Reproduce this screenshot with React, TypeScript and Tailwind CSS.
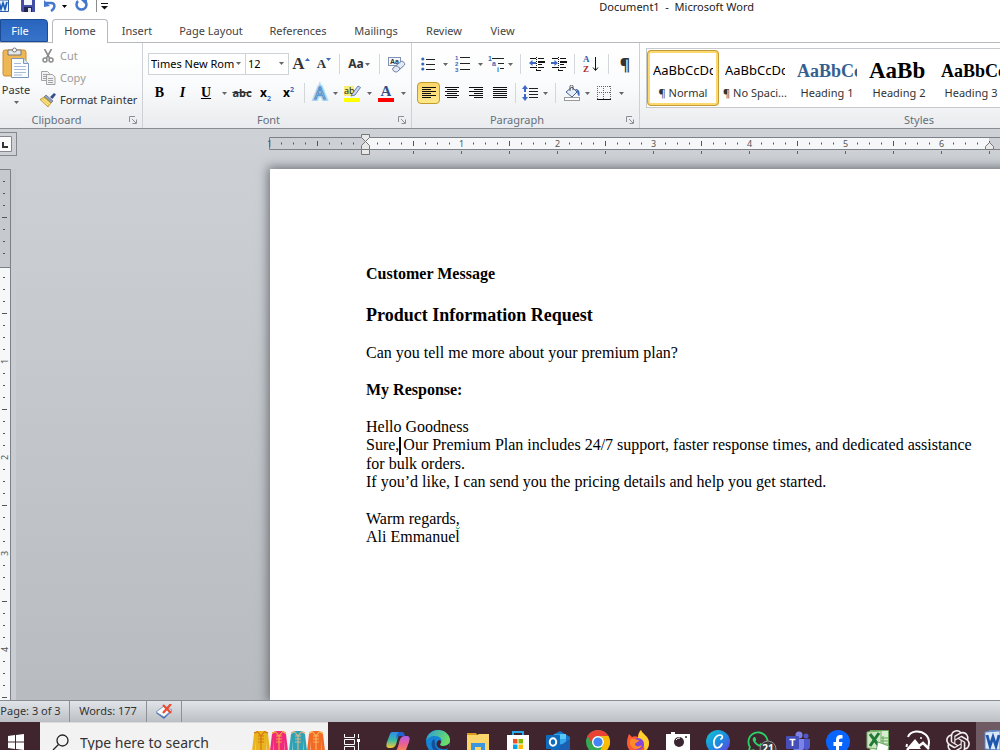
import type { ReactNode } from 'react';
import { FaWhatsapp } from 'react-icons/fa';
import { SiOpenai } from 'react-icons/si';
import { clsx } from 'clsx';

interface BtnProps {
  label: string;
  className?: string;
  active?: boolean;
  children: ReactNode;
}

const Btn = ({ label, className, active, children }: BtnProps) => (
  <button
    type="button"
    aria-label={label}
    className={clsx(
      'flex h-[22px] shrink-0 items-center justify-center rounded-sm border',
      active
        ? 'border-[#c29b29] bg-gradient-to-b from-[#fbd66b] to-[#ffe88a]'
        : 'border-transparent hover:bg-[#fdeeb3]',
      className,
    )}
  >
    {children}
  </button>
);

const Arrow = ({ className }: { className?: string }) => (
  <svg width="5" height="3" viewBox="0 0 5 3" className={clsx('shrink-0', className ?? 'text-[#666]')}>
    <path d="M0 0h5L2.5 3z" fill="currentColor" />
  </svg>
);

const DropArrow = ({ label, className }: { label: string; className?: string }) => (
  <Btn label={label} className={className ?? 'w-3'}>
    <Arrow />
  </Btn>
);

const Sep = ({ className }: { className?: string }) => (
  <div className={clsx('flex shrink-0 justify-center', className ?? 'w-2')}>
    <div className="h-5 w-px bg-[#d3d6da]" />
  </div>
);

interface GroupProps {
  title: string;
  className: string;
  launcher?: boolean;
  children: ReactNode;
}

const Group = ({ title, className, launcher, children }: GroupProps) => (
  <section aria-label={title} className={clsx('flex shrink-0 flex-col border-r border-[#cdd0d4]', className)}>
    <div className="min-h-0 flex-1">{children}</div>
    <div className="flex h-4 shrink-0 items-center pr-[5px] text-[#66707c]">
      <span className="flex-1 pr-1 text-center">{title}</span>
      {launcher && (
        <button type="button" aria-label={`${title} settings`}>
          <svg width="8" height="8" viewBox="0 0 8 8" fill="none" stroke="#8a8f96">
            <path d="M.5 6V.5H6M3 3l4 4M7.5 3.5v4h-4" />
          </svg>
        </button>
      )}
    </div>
  </section>
);

/* Paragraph icons */

const Lines = ({ rows }: { rows: [number, number][] }) => (
  <svg width="14" height="12" viewBox="0 0 14 12" shapeRendering="crispEdges">
    {rows.map(([x, w], i) => (
      <rect key={i} x={x} y={i * 2} width={w} height="1" fill="#111" />
    ))}
  </svg>
);

const alignments: { label: string; active?: boolean; className: string; rows: [number, number][] }[] = [
  { label: 'Align left', active: true, className: 'w-[23px]', rows: [[0, 14], [0, 9], [0, 14], [0, 9], [0, 14], [0, 9]] },
  { label: 'Center', className: 'w-6', rows: [[0, 14], [2, 10], [0, 14], [2, 10], [0, 14], [2, 10]] },
  { label: 'Align right', className: 'w-6', rows: [[0, 14], [5, 9], [0, 14], [5, 9], [0, 14], [5, 9]] },
  { label: 'Justify', className: 'w-[23px]', rows: [[0, 14], [0, 14], [0, 14], [0, 14], [0, 14], [0, 14]] },
];

const BulletsIcon = () => (
  <svg width="14" height="14" viewBox="0 0 14 14">
    {[2, 7, 12].map((y) => (
      <g key={y}>
        <circle cx="1.8" cy={y} r="1.6" fill="#3a67b8" />
        <path d={`M5 ${y + 0.5}h9`} stroke="#222" />
      </g>
    ))}
  </svg>
);

const NumberingIcon = () => (
  <svg width="15" height="16" viewBox="0 0 15 16" fontFamily="Liberation Sans, sans-serif">
    {[2, 8, 14].map((y, i) => (
      <g key={y}>
        <text x="0" y={y + 2} fontSize="6" fontWeight="700" fill="#3a67b8">{i + 1}</text>
        <path d={`M5 ${y - 0.5}h10`} stroke="#222" />
      </g>
    ))}
  </svg>
);

const MultilevelIcon = () => (
  <svg width="17" height="16" viewBox="0 0 17 16" fontSize="7" fontWeight="700" fontFamily="Liberation Sans, sans-serif">
    <g fill="#3a67b8">
      <text x="0" y="5">1</text>
      <text x="4" y="10">a</text>
      <text x="9" y="16">i</text>
    </g>
    <path d="M4 2.5h12M10 7.5h6M12 12.5h4" stroke="#222" />
  </svg>
);

const IndentIcon = ({ out }: { out?: boolean }) => (
  <svg width="16" height="14" viewBox="0 0 16 14">
    <path d="M1 1.5h6M9 1.5h6M1 10.5h6M9 10.5h6M7 13.5h5M9 7.5h4" stroke="#111" />
    <path d="M9 4h7v2H9z" fill="#111" />
    <path d="M7.5 0v14" stroke="#111" strokeDasharray="1 1" />
    <path d={out ? 'M0 6l3.5-3v2H7v2H3.5v2z' : 'M7 6L3.5 3v2H0v2h3.5v2z'} fill="#3a67c8" />
  </svg>
);

const SortIcon = () => (
  <svg width="16" height="18" viewBox="0 0 16 18" fontSize="9" fontWeight="700" fontFamily="Liberation Serif, serif">
    <text x="0" y="7" fill="#2f5fb0">A</text>
    <text x="0" y="17" fill="#a32b2b">Z</text>
    <path d="M12.5 2v13M10 12.5l2.5 3 2.5-3" stroke="#111" fill="none" />
  </svg>
);

const SpacingIcon = () => (
  <svg width="16" height="16" viewBox="0 0 16 16">
    <path d="M3 0l3 4H4v3H2V4H0zM3 16l3-4H4V9H2v3H0z" fill="#3a67c8" />
    <path d="M7 3.5h9M7 6.5h9M7 9.5h9M7 12.5h9" stroke="#222" />
  </svg>
);

const BucketIcon = () => (
  <svg width="17" height="16" viewBox="0 0 17 16">
    <path d="M2 7l6-5 5 5-5 5z" fill="#e6eefa" stroke="#46638f" />
    <path d="M6 6V1.5a1.5 1.5 0 013 0V5" fill="none" stroke="#555" />
    <path d="M11 4c4 0 5 2 4.5 7-2 0-2-3-2.5-5z" fill="#3a67b8" />
    <rect x=".5" y="12.5" width="15" height="3" fill="#fff" stroke="#999" />
  </svg>
);

const BordersIcon = () => (
  <svg width="14" height="14" viewBox="0 0 14 14">
    <path d="M0 .5h14M0 6.5h14M.5 0v13M6.5 0v13M13.5 0v13" fill="none" stroke="#666" strokeDasharray="1 1" />
    <path d="M0 13.5h14" stroke="#111" />
  </svg>
);

/* Clipboard icons */

const PasteIcon = () => (
  <svg width="28" height="32" viewBox="0 0 28 32">
    <rect x="1" y="3" width="23" height="26" rx="2" fill="#eeb655" stroke="#c98f36" />
    <path d="M6 3h13v5H6z" fill="#e6e6e6" stroke="#777" />
    <circle cx="12.5" cy="3" r="2" fill="#fff" stroke="#777" />
    <path d="M9.5 11.5h12l5 5v14h-17z" fill="#fbfdff" stroke="#7b97bd" />
    <path d="M21.5 11.5v5h5" fill="#dce7f5" stroke="#7b97bd" />
    <path d="M12 16.5h7M12 19.5h12M12 22.5h12M12 25.5h12M12 28h8" stroke="#a9bcd6" />
  </svg>
);

const CutIcon = () => (
  <svg width="16" height="14" viewBox="0 0 16 14" fill="none" stroke="#8b8b8b">
    <path d="M4.5 0l5 9M11.5 0l-5 9" strokeWidth="1.6" />
    <circle cx="5" cy="11" r="2" strokeWidth="1.5" />
    <circle cx="11" cy="11" r="2" strokeWidth="1.5" />
  </svg>
);

const CopyIcon = () => (
  <svg width="16" height="14" viewBox="0 0 16 14" fill="#f2f2f2" stroke="#a3a3a3">
    <path d="M1.5.5h6l2 2v7h-8z" />
    <path d="M3 3.5h4M3 5.5h4M3 7.5h4" />
    <path d="M6.5 3.5h6l2.5 2.5v7.5H6.5z" />
    <path d="M8 7.5h5M8 9.5h5M8 11.5h5" />
  </svg>
);

const BrushIcon = () => (
  <svg width="16" height="14" viewBox="0 0 16 14">
    <path d="M10 4l4-4 2 1.5L12.5 6z" fill="#34508c" />
    <path d="M6 2l7 6-2 2-7-6z" fill="#8fa0bb" stroke="#4a5568" strokeWidth=".6" />
    <path d="M4 4l7 6-3 4L0 6.5z" fill="#f1cd53" stroke="#a07a1c" strokeWidth=".6" />
    <path d="M2 7l6 5M4 6l6 5" stroke="#fff2b5" strokeWidth=".8" />
  </svg>
);

/* Font icons */

const ClearIcon = () => (
  <svg width="18" height="17" viewBox="0 0 18 17">
    <rect x=".5" y="1.5" width="12" height="8" fill="#f4f7fb" stroke="#7f93b5" />
    <text x="2" y="8" fontSize="7" fontWeight="700" fontFamily="Liberation Sans, sans-serif" fill="#333">Aa</text>
    <path d="M5 12l8-6.5c1.5-1 4.5 1.5 3.5 3.5l-7 6.5c-2 1.5-6-1-4.5-3.5z" fill="#e3eaf6" stroke="#6278a3" />
    <path d="M8 10c2 0 3.5 1.5 4 3" fill="none" stroke="#6278a3" />
  </svg>
);

const HighlightIcon = () => (
  <svg width="17" height="17" viewBox="0 0 17 17">
    <rect x="0" y="1" width="10" height="10" fill="#f7ee78" />
    <text x="0" y="9" fontSize="9" fill="#222">ab</text>
    <path d="M8 9l6-8 2.5 1.5L11 10l-4 1z" fill="#c9d7ee" stroke="#4c6391" strokeWidth=".8" />
    <rect x="0" y="13" width="16" height="4" fill="#ffff00" />
  </svg>
);

const FontColorIcon = () => (
  <svg width="16" height="17" viewBox="0 0 16 17" className="overflow-visible">
    <text x="8" y="11" fontSize="15" fontWeight="700" textAnchor="middle" fontFamily="Liberation Serif, serif" fill="#304f88">A</text>
    <rect x="0" y="13" width="16" height="4" fill="#ff0000" />
  </svg>
);

const EffectsIcon = () => (
  <svg width="16" height="18" viewBox="0 0 16 18" className="shrink-0 overflow-visible">
    <text x="8" y="15" fontSize="17" textAnchor="middle" fill="#eef7ff" stroke="#a8d4f2" strokeWidth="4" paintOrder="stroke">A</text>
    <text x="8" y="15" fontSize="17" textAnchor="middle" fill="#f2f9ff" stroke="#4b8bc6" strokeWidth="1">A</text>
  </svg>
);

const styles = [
  { name: '¶ Normal', sample: 'AaBbCcDc', look: 'text-[13px] text-black', active: true },
  { name: '¶ No Spaci...', sample: 'AaBbCcDc', look: 'text-[13px] text-black' },
  { name: 'Heading 1', sample: 'AaBbCc', look: "font-['Liberation_Serif',serif] text-lg font-bold text-[#365f91]" },
  { name: 'Heading 2', sample: 'AaBb', look: "font-['Liberation_Serif',serif] text-[23px] font-bold text-black" },
  { name: 'Heading 3', sample: 'AaBbCc', look: "font-['Liberation_Serif',serif] text-lg font-bold text-black" },
];

const tabs = [
  { name: 'Insert', className: 'w-[58px]' },
  { name: 'Page Layout', className: 'w-[90px]' },
  { name: 'References', className: 'w-[84px]' },
  { name: 'Mailings', className: 'w-[72px]' },
  { name: 'Review', className: 'w-16' },
  { name: 'View', className: 'w-[53px]' },
];

const TitleBar = () => (
  <header className="flex h-[19px] shrink-0 items-start bg-white">
    <svg width="9" height="12" viewBox="0 0 9 12">
      <path d="M0 0h8.5v11.5H0" fill="#eaf2fc" stroke="#2c5ba3" />
      <path d="M-1 2l2 7 2-6 2 6 2-7" fill="none" stroke="#1f5fb8" strokeWidth="1.8" />
    </svg>
    <button type="button" aria-label="Save" className="ml-3">
      <svg width="14" height="12" viewBox="0 0 14 12">
        <path d="M0 0h14v12H1l-1-1z" fill="#4450a8" />
        <path d="M3 0h8v5H3z" fill="#f3f5fb" />
        <path d="M3 7h8v5H3z" fill="#20264f" />
        <path d="M7 8h3v4H7z" fill="#dde2f0" />
      </svg>
    </button>
    <button type="button" aria-label="Undo" className="ml-[9px]">
      <svg width="13" height="12" viewBox="0 0 13 12" fill="none" stroke="#4478cf" strokeWidth="2.5">
        <path d="M2 3h5c5 0 4 6 0 8" />
        <path d="M0 0v7l6-1z" fill="#4478cf" stroke="none" />
      </svg>
    </button>
    <button type="button" aria-label="Undo list" className="ml-[5px] flex h-2 items-end">
      <Arrow className="text-black" />
    </button>
    <button type="button" aria-label="Repeat" className="ml-2">
      <svg width="13" height="12" viewBox="0 0 13 12" fill="none" stroke="#4478cf" strokeWidth="2.5">
        <path d="M3 1a5 5 0 107 0" />
        <path d="M6 0h6v6z" fill="#4478cf" stroke="none" />
      </svg>
    </button>
    <div className="ml-2 h-3 w-px bg-[#8b8b8b]" />
    <button type="button" aria-label="Customize toolbar" className="ml-1">
      <svg width="7" height="10" viewBox="0 0 7 10">
        <path d="M0 3.5h7" stroke="#111" />
        <path d="M0 6h7L3.5 9.5z" fill="#111" />
      </svg>
    </button>
    <h1 className="mr-[246px] ml-auto text-[11px] leading-[14px] text-[#222]">Document1 &nbsp;-&nbsp; Microsoft Word</h1>
  </header>
);

const TabBar = () => (
  <nav className="flex h-6 shrink-0 items-end border-b border-[#b6babf] bg-white text-[#444]">
    <button type="button" className="h-[23px] w-12 rounded-tr border border-[#1c4b96] bg-gradient-to-b from-[#2a65bd] to-[#3673c9] pt-0.5 pr-2 text-white">
      File
    </button>
    <button type="button" className="-mb-px ml-1 h-6 w-14 rounded-t border border-b-0 border-[#b6babf] bg-white">
      Home
    </button>
    {tabs.map((tab) => (
      <button key={tab.name} type="button" className={clsx('h-[23px] pt-0.5 whitespace-nowrap', tab.className)}>
        {tab.name}
      </button>
    ))}
  </nav>
);

const selectClass = 'h-full w-full appearance-none bg-transparent pl-0.5 text-black outline-none';

const Ribbon = () => (
  <div className="flex h-[86px] shrink-0 overflow-hidden border-b border-[#8a8e94] bg-gradient-to-b from-white via-[#fafbfc] to-[#e9ebee] text-[#333]">
    <Group title="Clipboard" className="-ml-3 w-[155px]" launcher>
      <div className="flex pt-1 pl-3">
        <button type="button" className="flex w-8 shrink-0 flex-col items-center">
          <PasteIcon />
          <span className="mt-1 leading-[14px]">Paste</span>
          <Arrow className="mt-1 text-[#666]" />
        </button>
        <div className="ml-2 flex flex-col text-[#9b9b9b]">
          <button type="button" className="flex h-[22px] items-center gap-1 pb-1">
            <CutIcon />
            Cut
          </button>
          <button type="button" className="flex h-[22px] items-center gap-1 pb-1">
            <CopyIcon />
            Copy
          </button>
          <button type="button" className="flex h-[22px] items-center gap-1 pb-1 whitespace-nowrap text-[#333]">
            <BrushIcon />
            Format Painter
          </button>
        </div>
      </div>
    </Group>

    <Group title="Font" className="w-[269px]" launcher>
      <div className="flex flex-col gap-[7px] pt-[10px] pl-[5px]">
        <div className="flex h-[22px] items-center">
          <div className="relative h-[22px] w-[98px] border border-[#cfd2d6] bg-white">
            <select aria-label="Font name" className={selectClass}>
              <option>Times New Rom</option>
            </select>
            <Arrow className="pointer-events-none absolute top-2 right-1 text-[#666]" />
          </div>
          <div className="relative h-[22px] w-[43px] border border-l-0 border-[#cfd2d6] bg-white">
            <select aria-label="Font size" className={selectClass}>
              <option>12</option>
            </select>
            <Arrow className="pointer-events-none absolute top-2 right-1 text-[#666]" />
          </div>
          <Btn label="Grow font" className="w-6 font-['Liberation_Serif',serif] text-[17px] font-bold">
            A
            <svg width="5" height="12" viewBox="0 0 5 12"><path d="M0 3h5L2.5 0z" fill="#3a67b8" /></svg>
          </Btn>
          <Btn label="Shrink font" className="w-[22px] font-['Liberation_Serif',serif] text-[13px] font-bold">
            A
            <svg width="5" height="12" viewBox="0 0 5 12"><path d="M0 0h5L2.5 3z" fill="#3a67b8" /></svg>
          </Btn>
          <Sep />
          <Btn label="Change case" className="w-8 gap-px text-xs font-bold">
            Aa
            <Arrow />
          </Btn>
          <Sep />
          <Btn label="Clear formatting" className="w-7">
            <ClearIcon />
          </Btn>
        </div>
        <div className="flex h-[22px] items-center font-['Liberation_Serif',serif]">
          <Btn label="Bold" className="w-[23px] text-sm font-bold text-black">B</Btn>
          <Btn label="Italic" className="w-[23px] text-sm font-bold text-black italic">I</Btn>
          <Btn label="Underline" className="w-6 text-sm font-bold text-black underline">U</Btn>
          <DropArrow label="Underline style" />
          <Btn label="Strikethrough" className="w-6 font-['Noto_Sans',sans-serif] font-bold line-through">abc</Btn>
          <Btn label="Subscript" className="w-[23px] font-['Noto_Sans',sans-serif] text-xs font-bold text-black">
            x<sub className="pt-2 text-[7px] text-[#3a67b8]">2</sub>
          </Btn>
          <Btn label="Superscript" className="w-[23px] font-['Noto_Sans',sans-serif] text-xs font-bold text-black">
            x<sup className="text-[7px] text-[#3a67b8]">2</sup>
          </Btn>
          <Sep />
          <Btn label="Text effects" className="w-[23px] font-['Noto_Sans',sans-serif]"><EffectsIcon /></Btn>
          <DropArrow label="Text effects list" className="w-2" />
          <Btn label="Highlight" className="w-[26px] font-['Noto_Sans',sans-serif]"><HighlightIcon /></Btn>
          <DropArrow label="Highlight color" className="w-2" />
          <Btn label="Font color" className="w-[26px]"><FontColorIcon /></Btn>
          <DropArrow label="Font color list" className="w-2" />
        </div>
      </div>
    </Group>

    <Group title="Paragraph" className="w-[228px]" launcher>
      <div className="flex flex-col gap-[7px] pt-[10px] pl-[5px]">
        <div className="flex h-[22px] items-center">
          <Btn label="Bullets" className="w-[22px]"><BulletsIcon /></Btn>
          <DropArrow label="Bullet library" />
          <Btn label="Numbering" className="w-[23px]"><NumberingIcon /></Btn>
          <DropArrow label="Numbering library" />
          <Btn label="Multilevel list" className="w-5"><MultilevelIcon /></Btn>
          <DropArrow label="Multilevel library" className="w-2" />
          <Sep className="w-3" />
          <Btn label="Decrease indent" className="w-[22px]"><IndentIcon out /></Btn>
          <Btn label="Increase indent" className="w-[22px]"><IndentIcon /></Btn>
          <Sep />
          <Btn label="Sort" className="w-[26px]"><SortIcon /></Btn>
          <Sep />
          <Btn label="Show formatting marks" className="w-[26px] text-base font-bold">¶</Btn>
        </div>
        <div className="flex h-[22px] items-center">
          {alignments.map((a) => (
            <Btn key={a.label} label={a.label} active={a.active} className={a.className}>
              <Lines rows={a.rows} />
            </Btn>
          ))}
          <Sep />
          <Btn label="Line spacing" className="w-[22px]"><SpacingIcon /></Btn>
          <DropArrow label="Line spacing list" className="w-2" />
          <Sep className="w-3" />
          <Btn label="Shading" className="w-[22px]"><BucketIcon /></Btn>
          <DropArrow label="Shading color" className="w-2" />
          <Btn label="Borders" className="w-[26px]"><BordersIcon /></Btn>
          <DropArrow label="Border list" className="w-2" />
        </div>
      </div>
    </Group>

    <Group title="Styles" className="w-[568px]">
      <div className="mt-[5px] ml-1.5 flex h-[60px] overflow-hidden border border-[#c5c8cc] bg-white">
        {styles.map((s) => (
          <button
            key={s.name}
            type="button"
            className={clsx(
              'my-px flex w-[72px] shrink-0 flex-col items-center border-[3px]',
              s.active ? 'rounded-sm border-[#fbd96e] outline outline-[#c39a36] -outline-offset-1' : 'border-transparent',
            )}
          >
            <span className="mt-1 flex h-7 w-[60px] items-center overflow-hidden">
              <span className={clsx('whitespace-nowrap', s.look)}>{s.sample}</span>
            </span>
            <span className="leading-4 whitespace-nowrap">{s.name}</span>
          </button>
        ))}
      </div>
    </Group>
  </div>
);

// One inch is 96 units, with a tick every eighth.
const INCH = 96;

const HorizontalRuler = () => (
  <svg width="900" height="40" viewBox="0 0 900 40" className="shrink-0">
    <rect x="7" y="8" width="816" height="13" fill="#cdd1d6" />
    <rect x="103" y="8" width="624" height="13" fill="#f6f7f8" />
    <path d="M823 8.5H7.5v12H823" fill="none" stroke="#7d8187" />
    <text x="5" y="18" fontSize="9" fill="#555">1</text>
    {Array.from({ length: 60 }, (_, i) => i - 7).map((i) => {
      const x = 103.5 + i * 12;
      if (i === 0) return null;
      if (i > 0 && i % 8 === 0) {
        return (
          <text key={i} x={x} y="18" fontSize="9" textAnchor="middle" fill="#555">{(i * 12) / INCH}</text>
        );
      }
      const half = i % 4 === 0;
      return <path key={i} d={half ? `M${x} 12v5` : `M${x} 13.5v2`} stroke="#555" />;
    })}
    {Array.from({ length: 13 }, (_, i) => (
      <path key={i} d={`M${151.5 + i * 48} 22v3`} stroke="#666" />
    ))}
    <g fill="#e9e9e9" stroke="#777">
      <path d="M99.5 5.5h8v3l-4 4-4-4z" />
      <path d="M99.5 20.5v-4l4-4 4 4v4z" />
      <path d="M99.5 20.5h8v5h-8z" />
      <path d="M723.5 20.5v-3l4-4 4 4v3z" />
    </g>
  </svg>
);

const VerticalRuler = () => (
  <svg width="11" height="816" viewBox="0 0 11 816" className="shrink-0">
    <rect width="11" height="98" fill="#c6cacf" />
    <rect y="98" width="11" height="718" fill="#f6f7f8" />
    <path d="M0 .5h10.5V816M0 98.5h10.5" fill="none" stroke="#7d8187" />
    {Array.from({ length: 60 }, (_, i) => i - 7).map((i) => {
      const y = 96.5 + i * 12;
      if (i === 0) return null;
      if (i > 0 && i % 8 === 0) {
        return (
          <text key={i} transform={`translate(8 ${y}) rotate(-90)`} fontSize="9" textAnchor="middle" fill="#555">
            {(i * 12) / INCH}
          </text>
        );
      }
      return <path key={i} d={i % 4 === 0 ? `M2 ${y}h5` : `M3 ${y}h2`} stroke="#555" />;
    })}
  </svg>
);

const Page = () => (
  <article className="ml-[254px] w-[816px] shrink-0 bg-white px-24 pt-24 font-['Liberation_Serif','Times_New_Roman',serif] text-base leading-[18px] whitespace-nowrap text-black shadow-[0_0_10px_2px_rgba(60,65,72,0.65)]">
    <h2 className="font-bold">Customer Message</h2>
    <h3 className="mt-[23px] text-lg leading-[18px] font-bold">Product Information Request</h3>
    <p className="mt-5">Can you tell me more about your premium plan?</p>
    <h2 className="mt-[19px] font-bold">My Response:</h2>
    <p className="mt-[19px]">Hello Goodness</p>
    <p>
      Sure,
      <span className="-mr-0.5 inline-block h-[18px] w-0.5 bg-black align-middle" /> Our Premium Plan includes 24/7 support, faster response times, and dedicated assistance
      <br />
      for bulk orders.
    </p>
    <p>If you’d like, I can send you the pricing details and help you get started.</p>
    <p className="mt-[19px]">
      Warm regards
      <span className="underline decoration-green-600 decoration-wavy decoration-1 [text-decoration-skip-ink:none]">,</span>
    </p>
    <p>Ali Emmanuel</p>
  </article>
);

const Workspace = () => (
  <main className="flex min-h-0 flex-1 flex-col overflow-hidden bg-gradient-to-b from-[#ced2d7] to-[#b8bbbf]">
    <div className="flex h-10 shrink-0">
      <button type="button" aria-label="Tab stop type" className="mt-[3px] mr-[245px] flex h-6 w-[17px] shrink-0 items-center border border-l-0 border-[#85898f]">
        <svg width="12" height="16" viewBox="0 0 12 16">
          <path d="M0 .5h11.5v15H0" fill="#fbfbfb" stroke="#85898f" />
          <path d="M3 6v5h5" fill="none" stroke="#333" strokeWidth="2" />
        </svg>
      </button>
      <HorizontalRuler />
    </div>
    <div className="flex min-h-0 flex-1">
      <VerticalRuler />
      <div className="w-[5px] shrink-0 bg-[#c9cdd2]" />
      <Page />
    </div>
  </main>
);

const StatusBar = () => (
  <footer className="flex h-[22px] shrink-0 items-stretch border-t border-[#888c92] bg-gradient-to-b from-[#e1e4e8] to-[#bcc0c5] text-[#333]">
    <button type="button" className="w-[70px] border-r border-[#8d9197] pr-2 whitespace-nowrap">Page: 3 of 3</button>
    <button type="button" className="w-[77px] border-r border-[#8d9197] whitespace-nowrap">Words: 177</button>
    <button type="button" aria-label="Proofing errors" className="flex w-[35px] items-center justify-center border-r border-[#8d9197]">
      <svg width="18" height="16" viewBox="0 0 18 16">
        <path d="M1 9l8-6 8 4-8 8z" fill="#4c6fb5" />
        <path d="M1 8l8-6 8 4-8 7z" fill="#f6f9fd" stroke="#6c87b8" strokeWidth=".8" />
        <path d="M8 1l8 8M16 0L8 9" stroke="#ee4a2c" strokeWidth="2.2" />
      </svg>
    </button>
  </footer>
);

/* Taskbar icons */

const Jacket = ({ x, fill, trim }: { x: number; fill: string; trim: string }) => (
  <g transform={`translate(${x} 0)`}>
    <path d="M5 1h8l3 3 2 17h-3.5L14 10v15H4V10L3.5 21H0L2 4z" fill={fill} />
    <path d="M5 1l4 5 4-5M9 6v18M6 6h6M6 9h6M6 12h6" fill="none" stroke={trim} strokeWidth="1.2" />
    <path d="M2 3l3-1M13 2l3 1" stroke={trim} strokeWidth="1.5" />
  </g>
);

const taskIcons: { name: string; art: ReactNode }[] = [
  {
    name: 'Copilot',
    art: (
      <>
        <defs>
          <linearGradient id="cpA" x1="0" y1="0" x2="0" y2="1">
            <stop offset="0" stopColor="#2b8cf0" />
            <stop offset=".5" stopColor="#37b9a5" />
            <stop offset="1" stopColor="#f3c935" />
          </linearGradient>
          <linearGradient id="cpB" x1="0" y1="0" x2="0" y2="1">
            <stop offset="0" stopColor="#b05fe8" />
            <stop offset=".5" stopColor="#ec5f93" />
            <stop offset="1" stopColor="#f58d48" />
          </linearGradient>
        </defs>
        <path d="M7 2h9c-3 1-4 5-5 9s-2 7-6 7H3c-3 0-3-3-2-6l3-8c.5-1.5 1.5-2 3-2z" fill="url(#cpA)" />
        <path d="M13 2h3c2 0 2.5 2 3 4h-5c-2 0-3 1-4 3 .5-3 1-6 3-7z" fill="#2462cf" />
        <path d="M17 22H8c3-1 4-5 5-9s2-7 6-7h2c3 0 3 3 2 6l-3 8c-.5 1.5-1.5 2-3 2z" fill="url(#cpB)" />
      </>
    ),
  },
  {
    name: 'Edge',
    art: (
      <>
        <defs>
          <linearGradient id="edge" x1="0" y1="0" x2="1" y2=".3">
            <stop offset="0" stopColor="#279be0" />
            <stop offset="1" stopColor="#6bdd68" />
          </linearGradient>
        </defs>
        <circle cx="12" cy="12" r="12" fill="#1683d4" />
        <path d="M0 11C1 4 6 0 12 0c7 0 12 5 12 10 0 4-3 6-7 6-3 0-3.5-1.5-2.5-2.5 3-4-1-7.5-5.5-7.5-4 0-8 2-9 5z" fill="url(#edge)" />
        <path d="M8 9c-4 3-3 10 2 13 4 2 8 1 11-2-6 2-12-1-12-6 0-2 0-3-1-5z" fill="#12509c" />
        <path d="M14.5 13.5c-1 1-.5 2.5 2.5 2.5 3 0 5-1 6.5-3l-1 5c-6 3-12 0-12-4 0-2 1-3 2.5-4 2 0 2.5 2 1.5 3.5z" fill="#41202f" />
      </>
    ),
  },
  {
    name: 'File Explorer',
    art: (
      <>
        <path d="M1 3h9l2 3H1z" fill="#d89b1c" />
        <path d="M1 5h10l2-1h10v18H1z" fill="#fbd56b" />
        <path d="M5 13h14v9h-4v-5H9v5H5z" fill="#3a96dd" />
      </>
    ),
  },
  {
    name: 'Microsoft Store',
    art: (
      <>
        <path d="M7 6V2h10v4" fill="none" stroke="#27a8e8" strokeWidth="2" />
        <path d="M1 5h22v16l-2 2H3l-2-2z" fill="#fff" />
        <path d="M7 9h4.5v4.5H7z" fill="#f25022" />
        <path d="M12.5 9H17v4.5h-4.5z" fill="#7fba00" />
        <path d="M7 14.5h4.5V19H7z" fill="#00a4ef" />
        <path d="M12.5 14.5H17V19h-4.5z" fill="#ffb900" />
      </>
    ),
  },
  {
    name: 'Outlook',
    art: (
      <>
        <path d="M5 6l9-5 10 6v15H5z" fill="#1677cf" />
        <path d="M8 4h12v10H8z" fill="#35a7ea" />
        <path d="M14 4h6v5h-6z" fill="#58c9f5" />
        <path d="M5 22l19-13v13z" fill="#1b5eb2" />
        <rect x="0" y="5" width="14" height="14" rx="1" fill="#0f6cbd" />
        <ellipse cx="7" cy="12" rx="3.2" ry="3.7" fill="none" stroke="#fff" strokeWidth="2" />
      </>
    ),
  },
  {
    name: 'Chrome',
    art: (
      <>
        <circle cx="12" cy="12" r="12" fill="#34a853" />
        <path d="M1.6 6A12 12 0 0122.4 6H12a6 6 0 00-5.2 9z" fill="#ea4335" />
        <path d="M22.4 6A12 12 0 0112 24l5.2-9A6 6 0 0012 6z" fill="#fbbc05" />
        <circle cx="12" cy="12" r="6" fill="#fff" />
        <circle cx="12" cy="12" r="4.6" fill="#4285f4" />
      </>
    ),
  },
  {
    name: 'Firefox',
    art: (
      <>
        <path d="M3 4l3 3c2-1 4-1 6 0 0-3 1-5 3-7 1 4 8 6 8 13s-5 11-11 11S1 19 1 13c0-4 1-6 2-9z" fill="#ff5a36" />
        <path d="M15 0c1 4 8 6 8 13 0 4-2 7-5 9 1-5 0-10-6-13 0-4 1-7 3-9z" fill="#ffd02f" />
        <circle cx="12" cy="14" r="6" fill="#8647d8" />
        <path d="M4 10c4-3 6 0 9 0 0 2-3 2-4 4 0 3 4 3 7 1-1 5-10 6-12-1z" fill="#ff8a2a" />
      </>
    ),
  },
  {
    name: 'Camera',
    art: (
      <>
        <path d="M0 4h5V2h4v2h15v17H0z" fill="#fff" />
        <circle cx="13" cy="12" r="5" fill="#3b2530" />
        <path d="M10 10a4 4 0 014-2" fill="none" stroke="#fff" />
        <circle cx="20" cy="7" r="1" fill="#3b2530" />
      </>
    ),
  },
  {
    name: 'Canva',
    art: (
      <>
        <defs>
          <linearGradient id="canva" x1="0" y1="0" x2="1" y2="1">
            <stop offset="0" stopColor="#15c5cf" />
            <stop offset=".5" stopColor="#198fe0" />
            <stop offset="1" stopColor="#7430e0" />
          </linearGradient>
        </defs>
        <circle cx="12" cy="12" r="12" fill="url(#canva)" />
        <path d="M15 9c2-1 2-4-1-4-4 0-7 5-6 9 1 6 6 4 8 0" fill="none" stroke="#fff" strokeWidth="1.7" strokeLinecap="round" />
      </>
    ),
  },
  {
    name: 'WhatsApp',
    art: (
      <>
        <FaWhatsapp size={24} color="#2bd366" />
        <circle cx="22" cy="19" r="8" fill="#3c3c3f" stroke="#909090" />
        <text x="22" y="22" fontSize="10" fontWeight="700" textAnchor="middle" fill="#fff">21</text>
      </>
    ),
  },
  {
    name: 'Teams',
    art: (
      <>
        <circle cx="13" cy="5" r="3.5" fill="#7b83eb" />
        <circle cx="20" cy="6" r="2.5" fill="#5059c9" />
        <path d="M16 9h8v7c0 4-4 5-6 3z" fill="#5059c9" />
        <path d="M7 9h11v8c0 7-11 7-11 0z" fill="#7b83eb" />
        <rect x="0" y="6" width="13" height="13" rx="1" fill="#464eb8" />
        <path d="M3.5 9.5h6M6.5 9.5V16" stroke="#fff" strokeWidth="1.7" />
      </>
    ),
  },
  {
    name: 'Facebook',
    art: (
      <>
        <circle cx="12" cy="12" r="12" fill="#0866ff" />
        <path d="M10 24v-8H7.5v-4H10v-2c0-4 2-5.5 5.5-5l1 .2V8.500h-1.500c-1.500 0-2 .7-2 2V12h3.500l-.7 4H13v8z" fill="#fff" />
      </>
    ),
  },
  {
    name: 'Excel',
    art: (
      <>
        <path d="M4 .5h18.5V23H4z" fill="#d8edcf" stroke="#67a85a" />
        <path d="M14 8h9M14 11h9M14 14h9M14 17h9M17 6v16" stroke="#61a554" />
        <path d="M1 2l14-1v18L1 18z" fill="#cde7c4" stroke="#77ae6a" />
        <path d="M4 4l9 12M13 3L4 16" stroke="#217a36" strokeWidth="3" />
        <path d="M12 12l11 4-2 8-11-3z" fill="#fff" stroke="#70a868" />
      </>
    ),
  },
  {
    name: 'Photos',
    art: (
      <g fill="none" stroke="#fff" strokeWidth="2">
        <path d="M2 7c1-3 4-5 8-5.5 8-.5 13 5 13 11 0 2-.5 4-1.5 5.5M1 14l-.5 3" />
        <path d="M1 20l8-9 4 5 4-3 6 6" strokeWidth="2.5" />
        <path d="M9 11l-7 8h13z" fill="#fff" stroke="none" />
        <circle cx="15" cy="8" r="1" fill="#fff" stroke="none" />
      </g>
    ),
  },
  { name: 'ChatGPT', art: <SiOpenai size={24} color="#f1eef0" /> },
];

const Taskbar = () => (
  <nav aria-label="Taskbar" className="h-7 shrink-0 overflow-hidden bg-[#40252f]">
    <div className="flex h-10">
      <button type="button" aria-label="Start" className="flex w-10 shrink-0 items-center justify-center pr-2">
        <svg width="16" height="16" viewBox="0 0 16 16" fill="#fff">
          <path d="M0 2l7-1v6.5H0zM8 1l8-1v7.5H8zM0 8.5h7V15l-7-1zM8 8.5h8V16l-8-1z" />
        </svg>
      </button>
      <label className="flex w-[288px] shrink-0 items-center border-t border-[#dcdcdc] bg-[#f2f2f2] pl-3">
        <svg width="17" height="17" viewBox="0 0 17 17" fill="none" stroke="#222" strokeWidth="1.3">
          <circle cx="10.5" cy="6.5" r="5.5" />
          <path d="M6.5 10.5L1 16" />
        </svg>
        <input
          type="search"
          aria-label="Search"
          placeholder="Type here to search"
          className="ml-[11px] w-[172px] bg-transparent text-sm text-[#333] outline-none placeholder:text-[#333]"
        />
        <svg width="74" height="26" viewBox="0 0 74 26" className="shrink-0">
          <Jacket x={0} fill="#eab41e" trim="#d27a10" />
          <Jacket x={18} fill="#f02a7b" trim="#f6a23c" />
          <Jacket x={37} fill="#2fa3b5" trim="#d8b48a" />
          <Jacket x={55} fill="#f26a26" trim="#f8b45a" />
        </svg>
      </label>
      <button type="button" aria-label="Task view" className="flex w-12 shrink-0 items-center justify-center">
        <svg width="18" height="18" viewBox="0 0 18 18" fill="none" stroke="#fff">
          <path d="M1.5 1v3.5h10V1M1.5 17v-3.5h10V17M1.5 6.5h10v5h-10zM15.5 1v4M15.5 9v8" />
          <path d="M14 6h3v3h-3z" fill="#fff" stroke="none" />
        </svg>
      </button>
      <div className="flex pl-0.5">
        {taskIcons.map((icon) => (
          <button key={icon.name} type="button" aria-label={icon.name} className="flex w-10 shrink-0 items-center justify-center">
            <svg width="24" height="24" viewBox="0 0 24 24" className="overflow-visible">
              {icon.art}
            </svg>
          </button>
        ))}
      </div>
      <button type="button" aria-label="Word" className="-ml-0.5 flex w-12 shrink-0 items-center bg-[#6f5962] pl-2">
        <svg width="24" height="24" viewBox="0 0 24 24">
          <path d="M5 .5h18V23H5z" fill="#e8f0fb" stroke="#5d87c4" />
          <path d="M1 2l15-1v19L1 19z" fill="#dce9f9" stroke="#5d87c4" />
          <path d="M3 5l3 11 3-9 3 9 3-11" fill="none" stroke="#1f57ae" strokeWidth="2.8" />
        </svg>
      </button>
    </div>
  </nav>
);

export default function App() {
  return (
    <div className="flex h-screen flex-col overflow-hidden font-['Noto_Sans','Open_Sans',sans-serif] text-[11px]">
      <TitleBar />
      <TabBar />
      <Ribbon />
      <Workspace />
      <StatusBar />
      <Taskbar />
    </div>
  );
}
